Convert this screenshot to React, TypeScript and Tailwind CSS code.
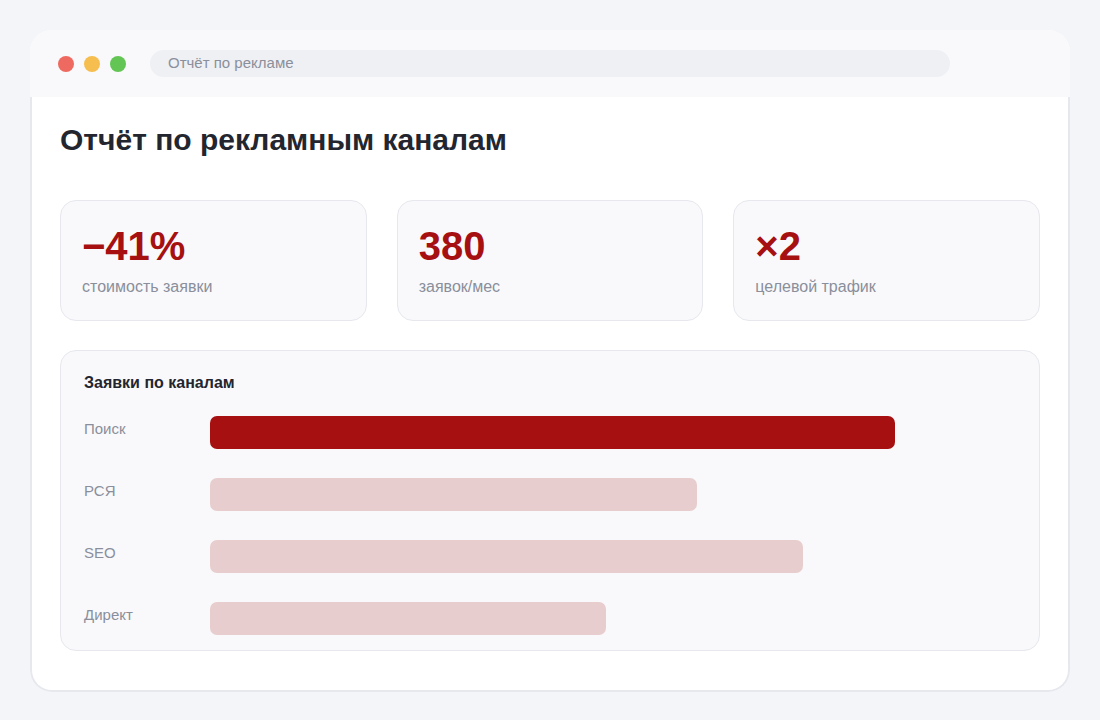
import React from 'react';

const stats = [
  { value: '−41%', label: 'стоимость заявки' },
  { value: '380', label: 'заявок/мес' },
  { value: '×2', label: 'целевой трафик' },
];

const channels = [
  { name: 'Поиск', width: 685, main: true },
  { name: 'РСЯ', width: 487, main: false },
  { name: 'SEO', width: 593, main: false },
  { name: 'Директ', width: 396, main: false },
];

export default function App() {
  return (
    <div
      className="w-[1100px] h-[720px] bg-[#f4f5f9] pt-[30px] px-[30px]"
      style={{ fontFamily: '"Liberation Sans", Arial, sans-serif' }}
    >
      <div className="w-[1040px] rounded-[22px] bg-white">
        {/* title bar */}
        <div className="h-[67px] rounded-t-[22px] bg-[#f9f9fb] flex items-center pl-[28px] pr-[120px]">
          <div className="flex gap-[10px]">
            <span className="w-[16px] h-[16px] rounded-full bg-[#ee6a60]"></span>
            <span className="w-[16px] h-[16px] rounded-full bg-[#f5be4f]"></span>
            <span className="w-[16px] h-[16px] rounded-full bg-[#62c554]"></span>
          </div>
          <div className="ml-[24px] flex-1 h-[27px] rounded-full bg-[#eff0f4] flex items-center px-[18px] text-[15px] text-[#8a8f9b]">
            Отчёт по рекламе
          </div>
        </div>

        {/* body */}
        <div className="border-x-2 border-b-2 border-[#e6e8ee] rounded-b-[22px] px-[28px] pt-[25px] pb-[39px]">
          <h1 className="text-[30px] leading-[36px] font-bold text-[#23262f]">
            Отчёт по рекламным каналам
          </h1>

          <div className="grid grid-cols-3 gap-[30px] mt-[42px]">
            {stats.map((s) => (
              <div
                key={s.label}
                className="h-[121px] rounded-[16px] border border-[#e6e8ee] bg-[#f9f9fb] px-[21px] pt-[24px]"
              >
                <div className="text-[40px] leading-[42px] font-bold text-[#a61010]">{s.value}</div>
                <div className="mt-[10px] text-[16px] leading-[20px] text-[#8a8f9b]">{s.label}</div>
              </div>
            ))}
          </div>

          <div className="mt-[29px] rounded-[16px] border border-[#e6e8ee] bg-[#f9f9fb] px-[23px] pt-[21px] pb-[15px]">
            <div className="text-[16px] leading-[22px] font-bold text-[#23262f]">Заявки по каналам</div>
            <div className="mt-[22px] flex flex-col gap-[29px]">
              {channels.map((c) => (
                <div key={c.name} className="flex items-center">
                  <div className="w-[126px] text-[15px] leading-[20px] text-[#8a8f9b] -mt-[8px]">{c.name}</div>
                  <div
                    className={c.main ? 'h-[33px] rounded-[7px] bg-[#a61010]' : 'h-[33px] rounded-[7px] bg-[#e8cdce]'}
                    style={{ width: c.width }}
                  ></div>
                </div>
              ))}
            </div>
          </div>
        </div>
      </div>
    </div>
  );
}
